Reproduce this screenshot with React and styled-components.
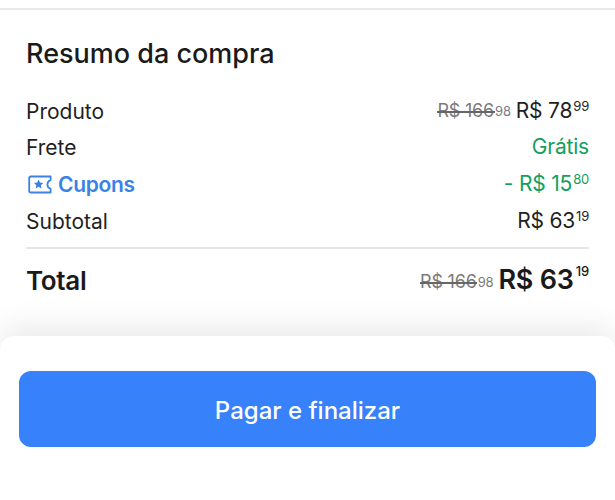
import React from "react";
import styled, { createGlobalStyle } from "styled-components";

const Global = createGlobalStyle`
  html, body { margin: 0; padding: 0; background: #fff; }
  body { font-family: "Inter", "Open Sans", sans-serif; }
`;
const Page = styled.div`
  width: 615px; height: 500px; overflow: hidden; background: #fff;
  display: flex; flex-direction: column;
`;
const Summary = styled.section`
  margin-top: 8px; height: 328px; box-sizing: border-box;
  border-top: 2px solid #e9e9e9; padding: 28px 26px 0;
`;
const Title = styled.h1`
  margin: 0 0 23px; font-size: 27px; line-height: 32px; font-weight: 500; color: #1a1a1a;
`;
const Row = styled.div`
  display: flex; justify-content: space-between; align-items: center;
  height: ${p => p.$h}px; font-size: 21px; color: ${p => p.$color || "#1f1f1f"};
  font-weight: 400;
`;
const Label = styled.span`
  display: flex; align-items: center; gap: 6px;
  font-weight: ${p => p.$bold ? 600 : 400};
  letter-spacing: ${p => p.$bold ? "-0.3px" : "0"};
  color: ${p => p.$color || "inherit"};
`;
const Price = styled.span`
  display: inline-flex; align-items: flex-start; line-height: 26px; letter-spacing: -0.2px;
`;
const Cents = styled.span`
  font-size: 13px; line-height: 17px; margin-left: 1px;
`;
const Old = styled.span`
  display: inline-flex; align-items: center; color: #7a7a7a; font-size: 18px;
  margin: ${p => p.$drop || 0}px 5px 0 0; position: relative; line-height: 26px;
  &::after {
    content: ""; position: absolute; left: 0; right: 16px; top: 13px;
    height: 1.5px; background: #666;
  }
`;
const OldCents = styled.span`
  font-size: 13px; margin-left: 1px;
`;
const Divider = styled.hr`
  margin: 8px 0 0; border: 0; height: 2px; background: #e6e6e6;
`;
const TotalRow = styled(Row)`
  height: 62px; font-size: 26px; color: #1a1a1a;
`;
const TotalPrice = styled.span`
  font-size: 27px; font-weight: 600; line-height: 32px;
  display: inline-flex; align-items: flex-start; color: #1a1a1a;
`;
const TotalCents = styled.span`
  font-size: 13px; line-height: 17px; font-weight: 500; margin-left: 2px; margin-top: -1px;
`;
const Sheet = styled.footer`
  flex: 1; background: #fff; border-radius: 14px 14px 0 0; position: relative;
  box-shadow: 0 -8px 32px rgba(0,0,0,.09);
  padding: 35px 19px 0;
`;
const PayButton = styled.button`
  width: 100%; height: 76px; border: 0; border-radius: 12px;
  background: #3781fb; color: #fff; font-family: inherit;
  font-size: 24px; font-weight: 500; padding: 2px 0 0;
`;
const TicketIcon = styled.svg`
  margin-left: 2px;
`;

const Ticket = () => (
  <TicketIcon width="24" height="19" viewBox="0 0 24 19" fill="none">
    <path d="M2.8 1.5H22.6V5.2C20.6 5.9 19.4 7.6 19.4 9.5S20.6 13.1 22.6 13.8V17.5H2.8A1.6 1.6 0 0 1 1.2 15.9V3.1A1.6 1.6 0 0 1 2.8 1.5Z" stroke="#3a82e4" strokeWidth="1.8" strokeLinejoin="round"/>
    <path d="M10.6 4.6L12 7.6L15.2 8L12.9 10.2L13.5 13.4L10.6 11.8L7.7 13.4L8.3 10.2L6 8L9.2 7.6Z" fill="#3a82e4"/>
  </TicketIcon>
);

export default function App() {
  return (
    <Page>
      <Global />
      <Summary>
        <Title>Resumo da compra</Title>
        <Row $h={36}>
          <Label>Produto</Label>
          <Price>
            <Old>R$ 166<OldCents>98</OldCents></Old>
            R$ 78<Cents>99</Cents>
          </Price>
        </Row>
        <Row $h={36} $color="#12a05c">
          <Label $color="#1f1f1f">Frete</Label>
          <Price>Grátis</Price>
        </Row>
        <Row $h={38} $color="#12a05c">
          <Label $bold $color="#3a82e4"><Ticket />Cupons</Label>
          <Price>- R$ 15<Cents>80</Cents></Price>
        </Row>
        <Row $h={36}>
          <Label>Subtotal</Label>
          <Price>R$ 63<Cents>19</Cents></Price>
        </Row>
        <Divider />
        <TotalRow>
          <Label $bold>Total</Label>
          <Price>
            <Old $drop={5}>R$ 166<OldCents>98</OldCents></Old>
            <TotalPrice>R$ 63<TotalCents>19</TotalCents></TotalPrice>
          </Price>
        </TotalRow>
      </Summary>
      <Sheet>
        <PayButton>Pagar e finalizar</PayButton>
      </Sheet>
    </Page>
  );
}
